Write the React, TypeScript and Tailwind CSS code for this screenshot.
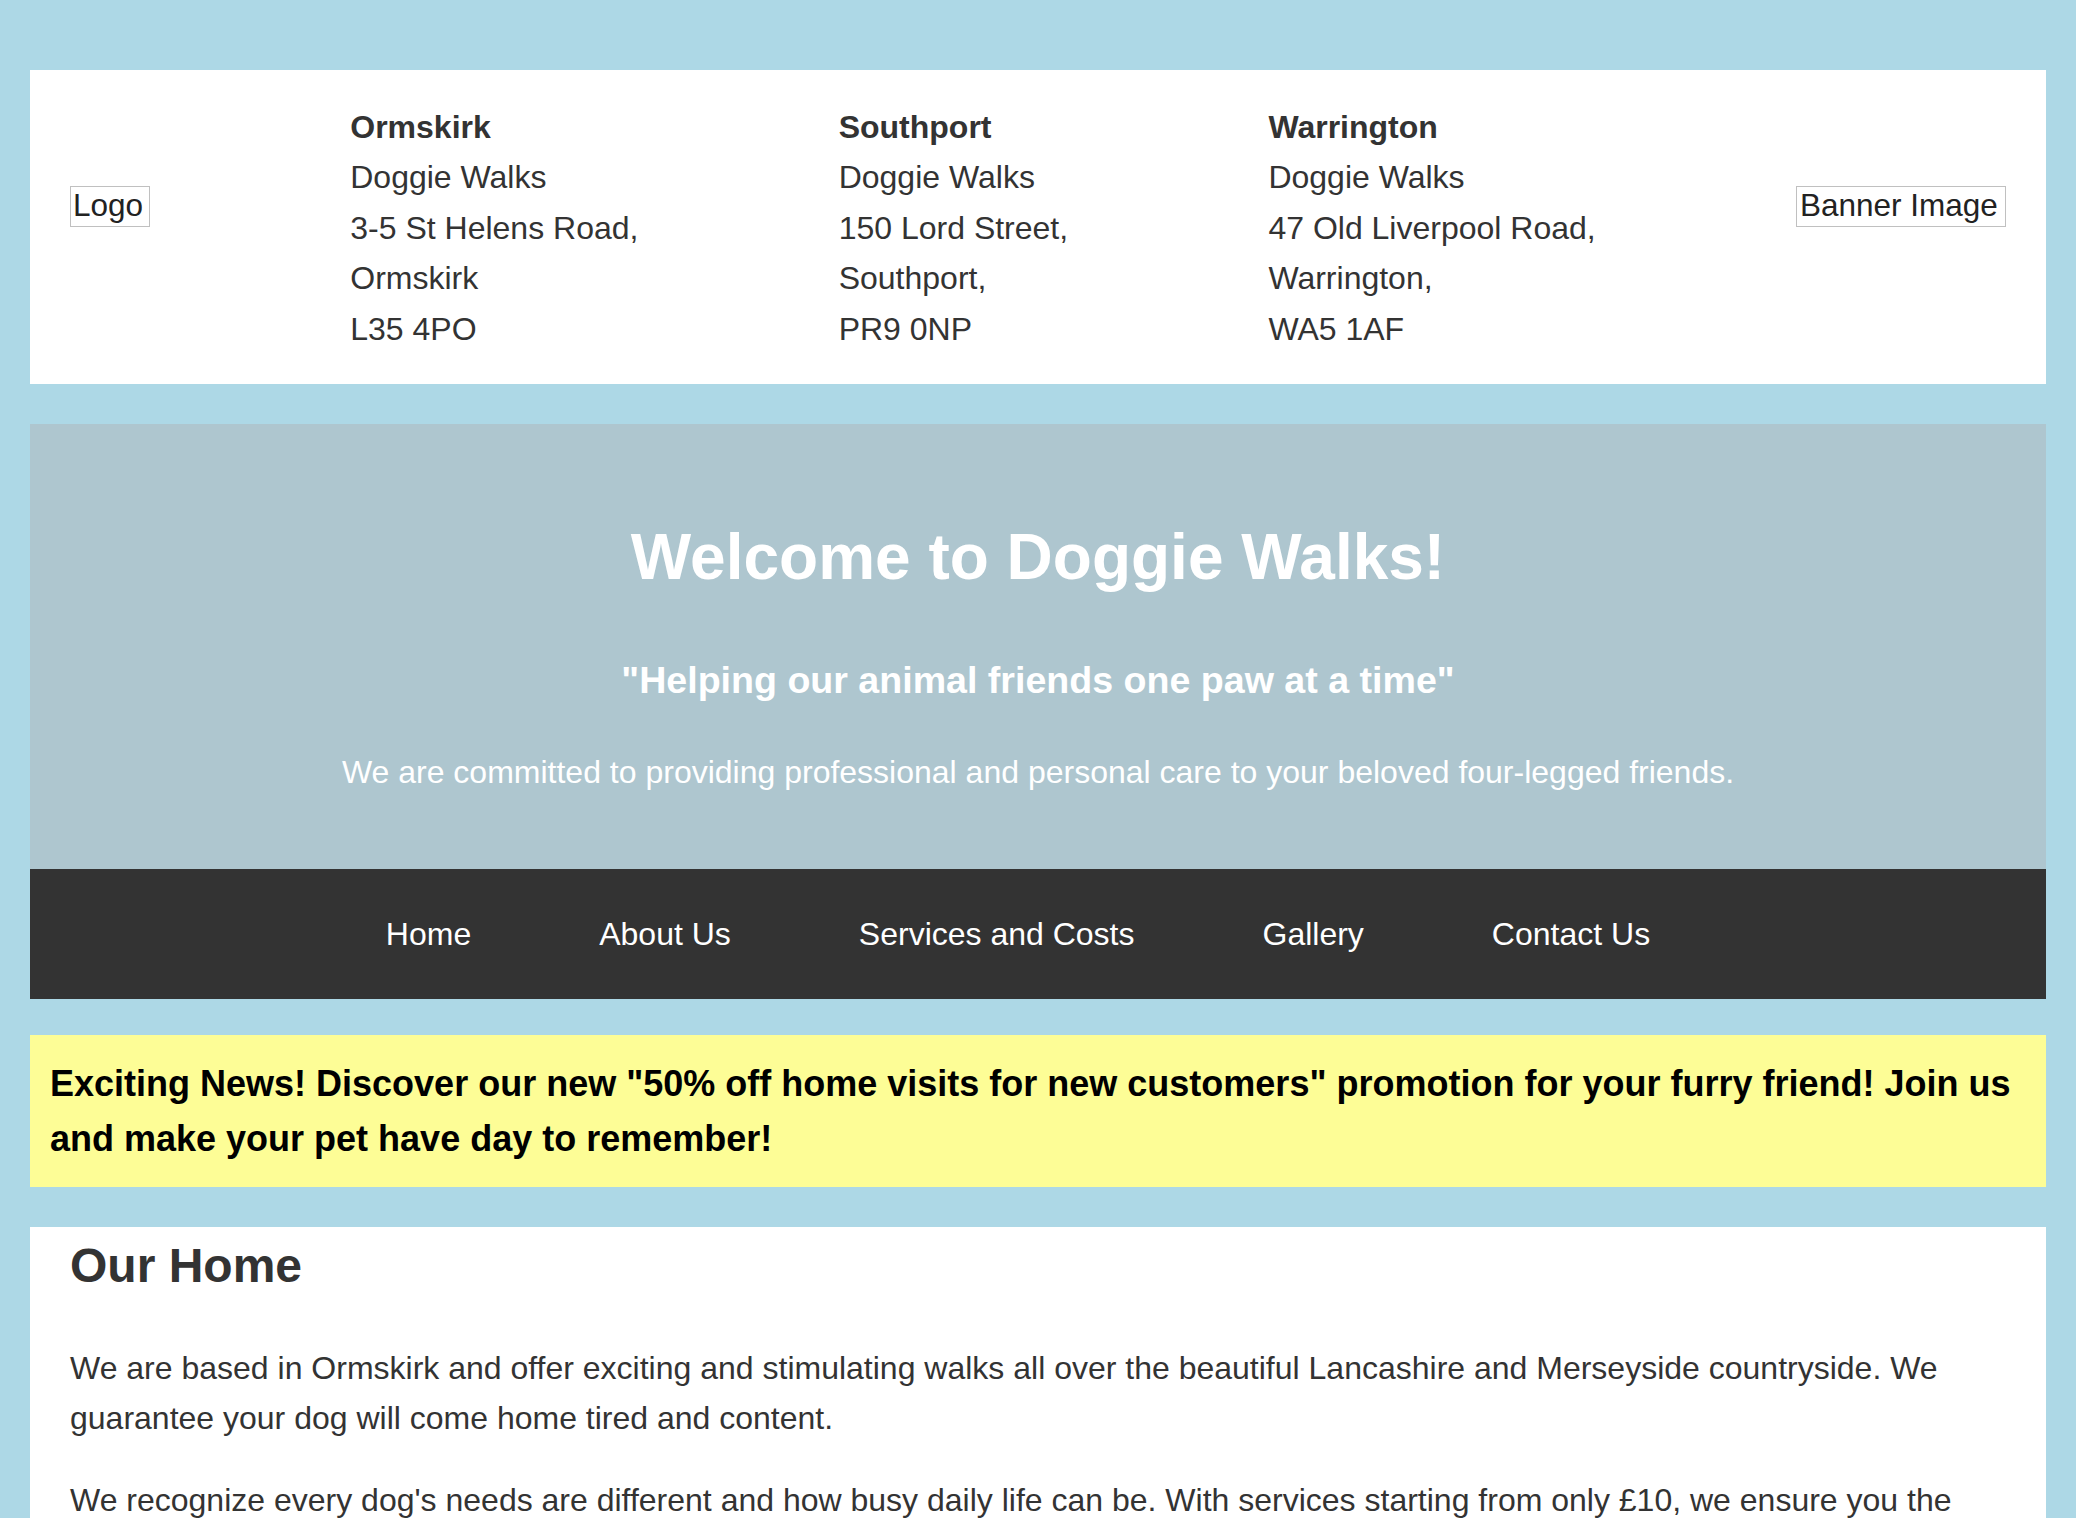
import React from "react";

const branches = [
  {
    town: "Ormskirk",
    lines: ["Doggie Walks", "3-5 St Helens Road,", "Ormskirk", "L35 4PO"],
  },
  {
    town: "Southport",
    lines: ["Doggie Walks", "150 Lord Street,", "Southport,", "PR9 0NP"],
  },
  {
    town: "Warrington",
    lines: ["Doggie Walks", "47 Old Liverpool Road,", "Warrington,", "WA5 1AF"],
  },
];

const navLinks = ["Home", "About Us", "Services and Costs", "Gallery", "Contact Us"];

const App = () => {
  return (
    <div className="min-h-screen bg-[#add8e6] px-[30px] pt-[70px] pb-[40px] font-['Liberation_Sans',Arial,sans-serif] text-[32px] leading-[50.4px] text-[#333]">
      {/* header */}
      <header className="flex items-start justify-between bg-white px-[40px] pt-[32px] pb-[30px]">
        <div className="mt-[84px] h-[41px] w-[80px] border border-[#c0c0c0] pl-[2px] text-[31.5px] leading-[37px] text-[#222]">
          Logo
        </div>
        {branches.map((b) => (
          <div key={b.town}>
            <p className="font-bold">{b.town}</p>
            {b.lines.map((l) => (
              <p key={l}>{l}</p>
            ))}
          </div>
        ))}
        <div className="mt-[84px] h-[41px] w-[210px] border border-[#c0c0c0] pl-[3px] text-[31.5px] leading-[37px] text-[#222]">
          Banner Image
        </div>
      </header>

      {/* hero */}
      <section className="mt-[40px] bg-[#aec6cf] pt-[82px] pb-[72px] text-center text-white">
        <h1 className="mb-[42px] text-[64px] font-bold leading-[1.6]">
          Welcome to Doggie Walks!
        </h1>
        <h3 className="text-[37.6px] font-bold leading-[1.6]">
          "Helping our animal friends one paw at a time"
        </h3>
        <p className="mt-[36px]">
          We are committed to providing professional and personal care to your beloved four-legged friends.
        </p>
      </section>

      <nav className="flex h-[130px] items-center justify-center gap-[128px] bg-[#333] pr-[40px]">
        {navLinks.map((n) => (
          <a key={n} href="#" className="text-white">
            {n}
          </a>
        ))}
      </nav>

      {/* promo */}
      <div className="mt-[36px] bg-[#fdfd96] px-[20px] py-[21px] text-[36px] font-bold leading-[55px] text-black">
        Exciting News! Discover our new "50% off home visits for new customers" promotion for your furry friend! Join us and make your pet have day to remember!
      </div>

      <main className="mt-[40px] bg-white px-[40px] pt-[1px] pb-[40px]">
        <h2 className="mb-[39px] text-[48px] font-bold leading-[75.6px]">Our Home</h2>
        <p className="mb-[31.5px]">
          We are based in Ormskirk and offer exciting and stimulating walks all over the beautiful Lancashire and Merseyside countryside. We guarantee your dog will come home tired and content.
        </p>
        <p className="mb-[31.5px]">
          We recognize every dog's needs are different and how busy daily life can be. With services starting from only £10, we ensure you the best value while giving your dog the care and attention they deserve.
        </p>
      </main>
    </div>
  );
};

export default App;
